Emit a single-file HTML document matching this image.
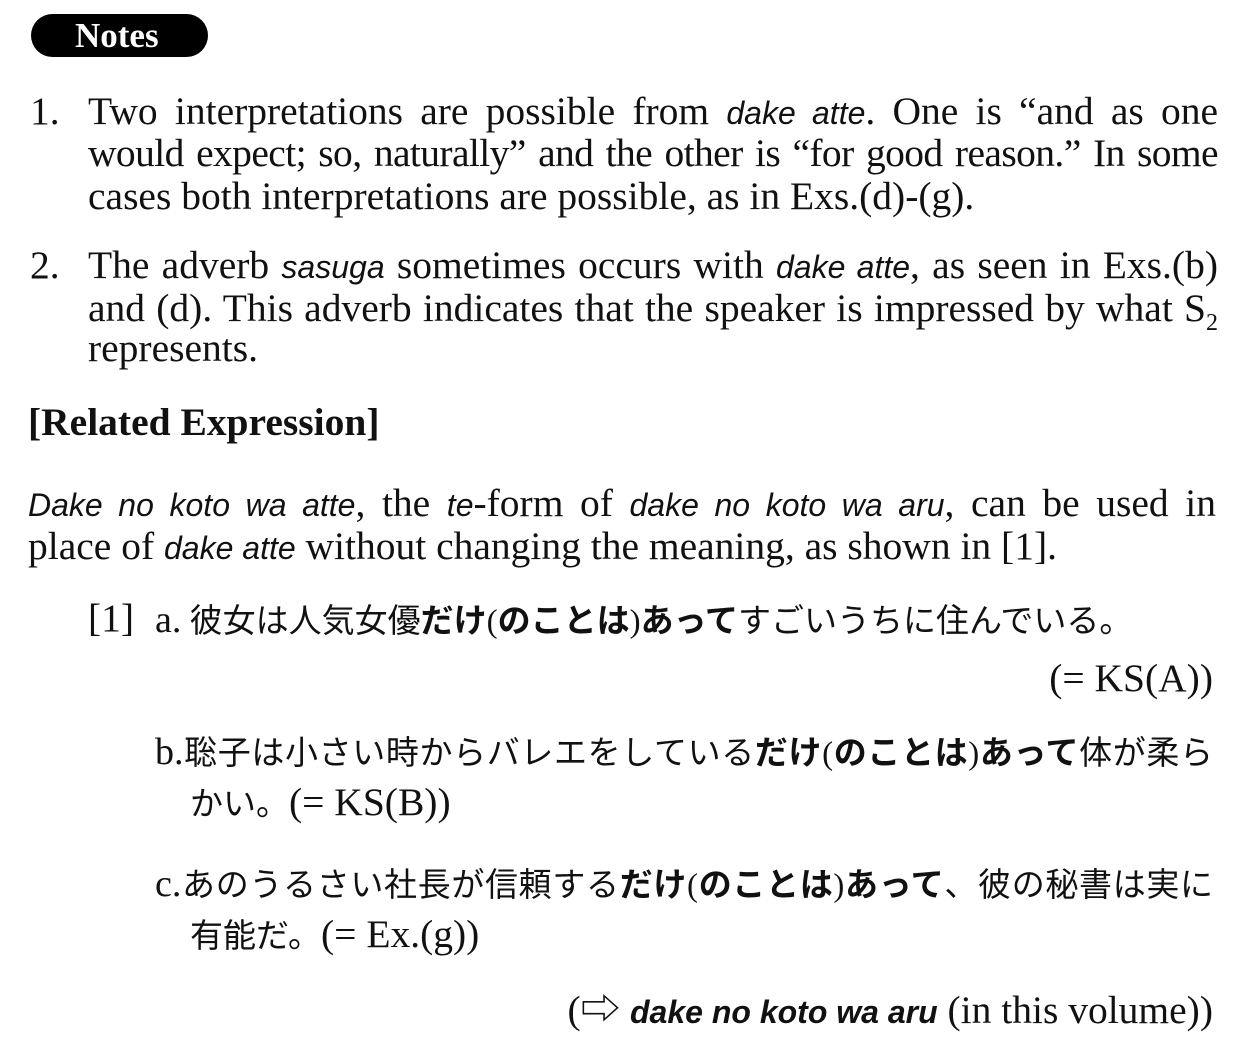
<!DOCTYPE html>
<html><head><meta charset="utf-8"><style>
body{margin:0;width:1247px;height:1056px;background:#fff;position:relative;overflow:hidden;color:#111;font-family:"Liberation Serif","Noto Serif CJK SC",serif;font-size:39.5px}
.l{position:absolute;white-space:nowrap;line-height:43px}
.j{text-align:justify;text-align-last:justify;white-space:normal}
.s{font-family:"Liberation Sans",sans-serif;font-style:italic;font-size:32px}
.sb{font-family:"Liberation Sans",sans-serif;font-style:italic;font-weight:bold;font-size:32px}
.jp{font-family:"Liberation Serif","Noto Sans CJK JP",serif;font-size:33px}
.jb{font-family:"Noto Sans CJK JP",sans-serif;font-weight:bold}
.r{right:34px;text-align:right}
#badge{position:absolute;left:31px;top:14px;width:177px;height:43px;background:#000;border-radius:22px;color:#fff;font-weight:bold;font-size:35px;line-height:43px;text-indent:44px}
</style></head><body>
<div id="badge">Notes</div>
<div class="l" style="left:30px;top:90px">1.</div>
<div class="l j" style="left:88px;top:90px;width:1130px">Two interpretations are possible from <span class="s">dake atte</span>. One is “and as one</div>
<div class="l j" style="left:88px;top:132px;width:1130px;letter-spacing:-0.6px;word-spacing:-2px">would expect; so, naturally” and the other is “for good reason.” In some</div>
<div class="l" style="left:88px;top:175px">cases both interpretations are possible, as in Exs.(d)-(g).</div>
<div class="l" style="left:30px;top:244px">2.</div>
<div class="l j" style="left:88px;top:244px;width:1130px">The adverb <span class="s">sasuga</span> sometimes occurs with <span class="s">dake atte</span>, as seen in Exs.(b)</div>
<div class="l j" style="left:88px;top:287px;width:1130px">and (d). This adverb indicates that the speaker is impressed by what S<sub style="font-size:24px;line-height:0">2</sub></div>
<div class="l" style="left:88px;top:327px">represents.</div>
<div class="l" style="left:28px;top:401px;font-weight:bold">[Related Expression]</div>
<div class="l j" style="left:28px;top:482px;width:1188px"><span class="s">Dake no koto wa atte</span>, the <span class="s">te</span>-form of <span class="s">dake no koto wa aru</span>, can be used in</div>
<div class="l" style="left:28px;top:525px">place of <span class="s">dake atte</span> without changing the meaning, as shown in [1].</div>
<div class="l" style="left:88px;top:597px">[1]</div>
<div class="l jp" style="left:155px;top:597px"><span style="font-family:'Liberation Serif',serif;font-size:38px">a.</span> 彼女は人気女優<span class="jb">だけ</span>(<span class="jb">のことは</span>)<span class="jb">あって</span>すごいうちに住んでいる。</div>
<div class="l r" style="top:657px">(= KS(A))</div>
<div class="l jp j" style="left:155px;top:729px;width:1058px"><span style="font-family:'Liberation Serif',serif;font-size:38px">b.</span>聡子は小さい時からバレエをしている<span class="jb">だけ</span>(<span class="jb">のことは</span>)<span class="jb">あって</span>体が柔ら</div>
<div class="l" style="left:190px;top:781px"><span class="jp">かい。</span>(= KS(B))</div>
<div class="l jp j" style="left:155px;top:861px;width:1058px"><span style="font-family:'Liberation Serif',serif;font-size:38px">c.</span>あのうるさい社長が信頼する<span class="jb">だけ</span>(<span class="jb">のことは</span>)<span class="jb">あって</span>、彼の秘書は実に</div>
<div class="l" style="left:190px;top:913px"><span class="jp">有能だ。</span>(= Ex.(g))</div>
<div class="l r" style="top:989px">(⇨ <span class="sb">dake no koto wa aru</span> (in this volume))</div>
</body></html>
